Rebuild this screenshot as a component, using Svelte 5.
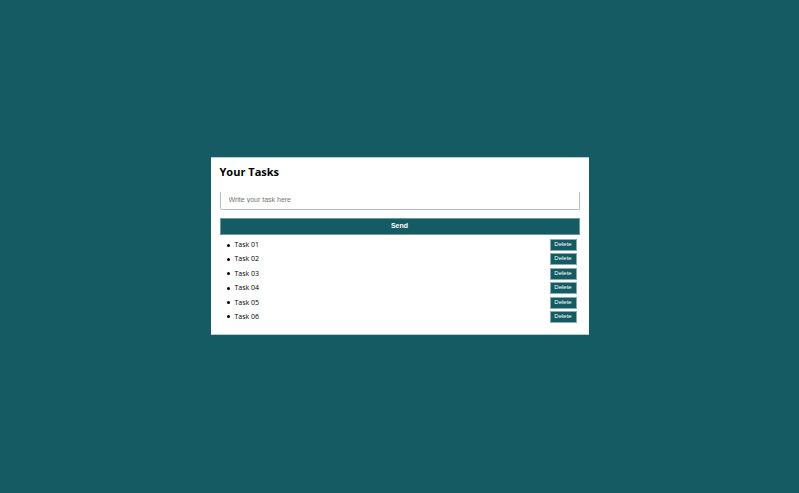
<script>
  let tasks = $state(['Task 01', 'Task 02', 'Task 03', 'Task 04', 'Task 05', 'Task 06']);
  let draft = $state('');

  function add(event) {
    event.preventDefault();
    const text = draft.trim();
    if (text) tasks.push(text);
    draft = '';
  }

  function remove(index) {
    tasks.splice(index, 1);
  }
</script>

<main>
  <section class="card">
    <h1>Your Tasks</h1>
    <form onsubmit={add}>
      <input type="text" aria-label="Task" placeholder="Write your task here" bind:value={draft} />
      <button class="send" type="submit">Send</button>
    </form>
    <ul>
      {#each tasks as task, i}
        <li>
          <span class="name">{task}</span>
          <button class="delete" type="button" onclick={() => remove(i)}>Delete</button>
        </li>
      {/each}
    </ul>
  </section>
</main>

<style>
  :global(body) {
    margin: 0;
    background: #155b64;
  }

  main {
    min-height: 100vh;
    box-sizing: border-box;
    display: flex;
    align-items: center;
    justify-content: center;
    padding-bottom: 1px;
    font-family: 'Open Sans', 'Noto Sans', sans-serif;
  }

  .card {
    width: 100%;
    max-width: 378px;
    box-sizing: border-box;
    padding: 6px 9px 11px;
    background: #fff;
    border: solid #b9ced1;
    border-width: 1px 0;
  }

  h1 {
    margin: 0 0 13px;
    font-size: 11px;
    line-height: 15px;
    color: #000;
  }

  form {
    display: flex;
    flex-direction: column;
    gap: 8px;
  }

  input {
    height: 18px;
    box-sizing: border-box;
    padding: 0 8px 2px;
    border: 1px solid #bbb;
    border-top: 0;
    border-radius: 0 0 2px 2px;
    outline: 0;
    background: #fff;
    font: 7px 'Liberation Sans', Arial, sans-serif;
    color: #333;
  }

  input::placeholder {
    color: #757575;
    opacity: 1;
  }

  button {
    padding: 0 0 2px;
    background: #155b64;
    color: #fff;
    font-family: 'Liberation Sans', Arial, sans-serif;
    cursor: pointer;
  }

  .send {
    height: 17px;
    border: 1px solid #6f999f;
    font-size: 7px;
    font-weight: 700;
  }

  ul {
    min-height: 84px;
    display: flex;
    flex-direction: column;
    justify-content: space-between;
    margin: 4px 0 0;
    padding: 0 3px 0 7px;
    list-style: none;
  }

  li {
    height: 12px;
    display: flex;
    align-items: center;
    font-size: 7px;
    line-height: 12px;
    color: #000;
  }

  li::before {
    content: '';
    width: 3px;
    height: 3px;
    margin-right: 5px;
    border-radius: 50%;
    background: #000;
  }

  .name {
    flex: 1;
  }

  .delete {
    width: 27px;
    height: 12px;
    box-sizing: border-box;
    border: 1px solid #8aabb0;
    font-size: 6px;
    line-height: 8px;
  }
</style>
